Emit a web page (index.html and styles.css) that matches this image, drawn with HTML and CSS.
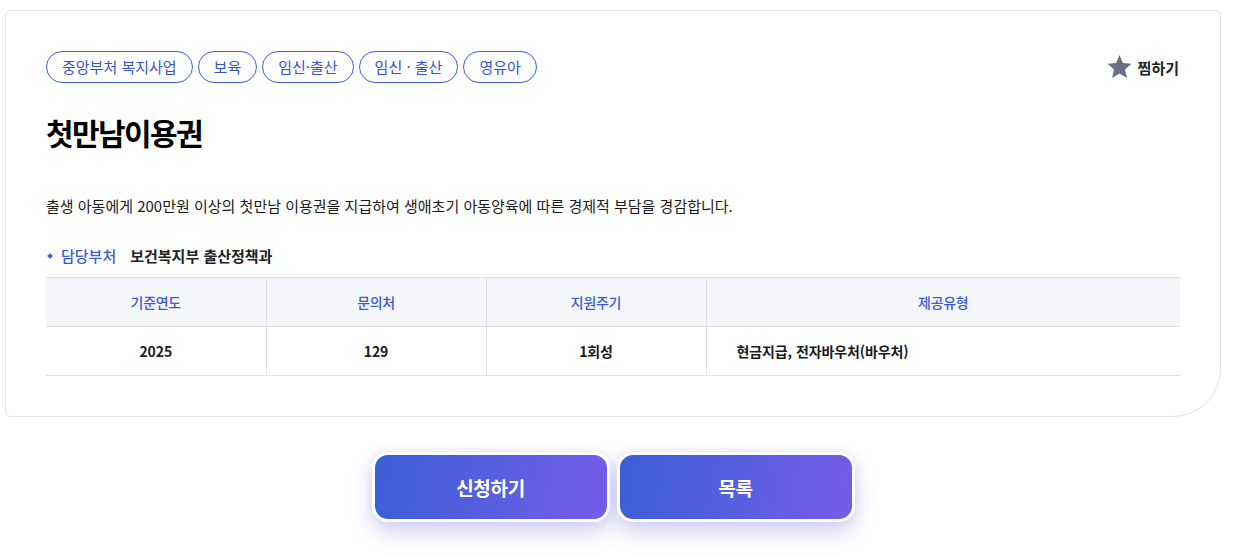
FILE: index.html
```html
<!DOCTYPE html>
<html lang="ko">
<head>
<meta charset="utf-8">
<link rel="stylesheet" href="styles.css">
</head>
<body>
<div class="page">
  <section class="card">
    <div class="top-row">
      <ul class="tags">
        <li class="tag">중앙부처 복지사업</li>
        <li class="tag">보육</li>
        <li class="tag">임신·출산</li>
        <li class="tag">임신 · 출산</li>
        <li class="tag">영유아</li>
      </ul>
      <button class="fav" type="button">
        <svg class="star" viewBox="0 0 24 24" width="27" height="26"><path d="M12 1l3.1 7.4 8 .7-6.1 5.3 1.9 7.8L12 18l-6.9 4.2 1.9-7.8L.9 9.1l8-.7z" fill="#6b6f86"/></svg>
        <span>찜하기</span>
      </button>
    </div>
    <h1 class="title">첫만남이용권</h1>
    <p class="desc">출생 아동에게 200만원 이상의 첫만남 이용권을 지급하여 생애초기 아동양육에 따른 경제적 부담을 경감합니다.</p>
    <div class="dept">
      <span class="dept-label">담당부처</span>
      <span class="dept-value">보건복지부 출산정책과</span>
    </div>
    <table class="info">
      <thead>
        <tr><th>기준연도</th><th>문의처</th><th>지원주기</th><th class="wide">제공유형</th></tr>
      </thead>
      <tbody>
        <tr><td>2025</td><td>129</td><td>1회성</td><td class="left">현금지급, 전자바우처(바우처)</td></tr>
      </tbody>
    </table>
  </section>
  <div class="actions">
    <button class="btn" type="button">신청하기</button>
    <button class="btn" type="button">목록</button>
  </div>
</div>
</body>
</html>
```

FILE: styles.css
```css
* { box-sizing: border-box; }
html, body { margin: 0; padding: 0; background: #fff; }
body {
  font-family: "Noto Sans CJK KR", "Noto Sans", sans-serif;
  color: #111;
}
.page { padding: 10px 12px 36px 5px; }
.card {
  border: 1px solid #e2e2e2;
  border-radius: 6px 6px 48px 6px;
  padding: 40px 40px 40px 40px;
  height: 407px;
}
.top-row {
  display: flex;
  justify-content: space-between;
  align-items: center;
}
.tags {
  list-style: none;
  margin: 0;
  padding: 0;
  display: flex;
  gap: 5px;
}
.tag {
  height: 32px;
  line-height: 29px;
  padding: 0 15px;
  border: 1px solid #3d5fd8;
  border-radius: 16px;
  color: #3455d1;
  font-size: 15px;
}
.fav {
  display: flex;
  align-items: center;
  gap: 5px;
  background: none;
  border: 0;
  padding: 0;
  margin-right: 1px;
  font-family: inherit;
  font-size: 15px;
  font-weight: 700;
  color: #222;
}
.title {
  margin: 27px 0 0;
  font-size: 30px;
  line-height: 44px;
  font-weight: 700;
  letter-spacing: -1.6px;
  color: #000;
}
.desc {
  margin: 41px 0 0;
  font-size: 15px;
  line-height: 22px;
  color: #1a1a1a;
}
.dept {
  margin-top: 28px;
  display: flex;
  align-items: center;
  font-size: 15px;
  line-height: 22px;
}
.dept-label {
  position: relative;
  padding-left: 15px;
  color: #3c5bd6;
  font-weight: 500;
}
.dept-label::before {
  content: "";
  position: absolute;
  left: 2px;
  top: 9px;
  width: 4px;
  height: 4px;
  background: #3c5bd6;
  transform: rotate(45deg);
}
.dept-value {
  margin-left: 14px;
  font-weight: 700;
  color: #222;
}
.info {
  margin-top: 10px;
  width: 100%;
  border-collapse: collapse;
  table-layout: fixed;
  font-size: 14px;
  letter-spacing: -0.3px;
}
.info th, .info td {
  height: 49px;
  text-align: center;
  border-top: 1px solid #dfe0e4;
  border-bottom: 1px solid #dfe0e4;
  border-left: 1px solid #dfe0e4;
}
.info th:first-child, .info td:first-child { border-left: 0; }
.info th {
  background: #f5f6fa;
  color: #3b5bd6;
  font-weight: 500;
  width: 220px;
}
.info th.wide { width: auto; }
.info td {
  font-weight: 700;
  color: #1a1a1a;
  letter-spacing: -0.1px;
}
.info td.left { text-align: left; padding-left: 30px; }
.actions {
  display: flex;
  justify-content: center;
  gap: 7px;
  margin-top: 35px;
}
.btn {
  width: 238px;
  height: 70px;
  border: 3px solid #fff;
  border-radius: 16px;
  background: linear-gradient(100deg, #3b5fd6 0%, #5a5ee0 55%, #775ce9 100%);
  color: #fff;
  font-family: inherit;
  font-size: 19px;
  font-weight: 700;
  letter-spacing: -0.3px;
  box-shadow: 0 10px 22px rgba(96, 92, 210, 0.28), 0 0 10px rgba(120, 110, 220, 0.12);
}
```
